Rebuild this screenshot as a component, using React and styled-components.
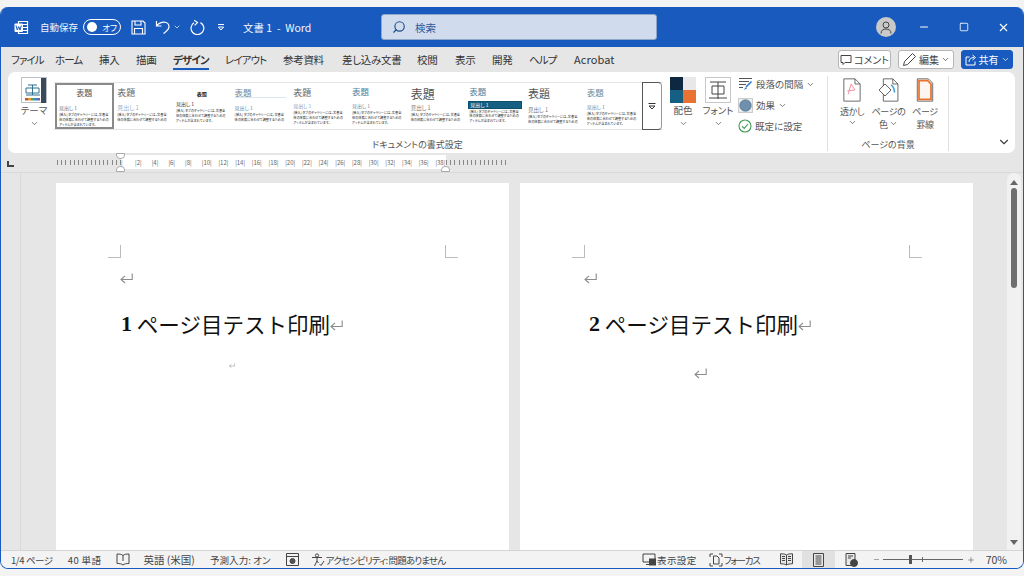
import styled, { createGlobalStyle } from "styled-components";
import { ChevronDown, Minus, Plus, Search, Square, X } from "lucide-react";

const GlobalStyle = createGlobalStyle`
    html, body {
        margin: 0;
        padding: 0;
        width: 1024px;
        height: 576px;
        overflow: hidden;
        background: #f3f3f3;
        font-family: "Noto Sans CJK JP", "Noto Sans", sans-serif;
        font-feature-settings: "palt";
        color: #444;
    }
    * { box-sizing: border-box; }
`

const tabs = [
    ["ファイル", 44], ["ホーム", 44], ["挿入", 37], ["描画", 37], ["デザイン", 52, true], ["レイアウト", 58],
    ["参考資料", 59], ["差し込み文書", 75], ["校閲", 38], ["表示", 37], ["開発", 37], ["ヘルプ", 45], ["Acrobat", 50],
];

const BODY_LONG = "[挿入] タブのギャラリーには、文書全体の体裁に合わせて調整するためのアイテムが含まれています。";
const BODY_SHORT = "[挿入] タブのギャラリーには、文書全体の体裁に合わせて調整するための";

const styles = [
    { center: true, size: 8, color: "#555", sub: "#777", top: 3, gap: 7, selected: true },
    { size: 9, color: "#666", sub: "#9db4c6", subSize: 6, top: 3.5, gap: 7.5, short: true },
    { center: true, size: 5, color: "#222", sub: "#333", top: 7, gap: 4, bold: true },
    { size: 8.5, color: "#6d8ba0", sub: "#6d8ba0", top: 3.75, gap: 7, rule: true, short: true },
    { size: 9, color: "#666", sub: "#7d9ec0", top: 3.5, gap: 5.5 },
    { size: 8.5, color: "#4f7f9b", sub: "#6d8ba0", top: 3.25, gap: 6.25 },
    { size: 12, color: "#555", sub: "#777", subSize: 5.5, top: 4, gap: 4, short: true },
    { size: 8.5, color: "#4f7f9b", sub: "#fff", top: 2.75, gap: 5.25, bar: true },
    { size: 11, color: "#555", sub: "#777", subSize: 5.5, top: 3.5, gap: 7.5, short: true },
    { size: 8.5, color: "#6d8ba0", sub: "#6d8ba0", top: 3.75, gap: 6.75 },
];

function Arrow({ size = 13 }) {
    return (
        <ArrowSvg width={size} height={size * 0.85} viewBox="0 0 13 11" fill="none" stroke="#8c8c8c" strokeWidth="1.1">
            <path d="M12.2 .5V6.5H1M5 2.8 1 6.5 5 10" />
        </ArrowSvg>
    );
}

function WordIcon() {
    return (
        <svg width="15" height="15" viewBox="0 0 15 15" fill="none">
            <path d="M4.5 1.5h9v12h-9z" stroke="#fff" strokeWidth="1.2" />
            <path d="M9 4.5h4M9 7.5h4M9 10.5h4" stroke="#fff" />
            <rect x=".5" y="3.5" width="8.5" height="8.5" rx="1" fill="#fff" />
            <path d="M2 5.5 3.3 10l1.4-3.4L6 10l1.3-4.5" stroke="#185abd" strokeWidth="1" />
        </svg>
    );
}

function SaveIcon() {
    return (
        <svg width="15" height="15" viewBox="0 0 15 15" fill="none" stroke="#fff" strokeWidth="1.1">
            <path d="M1 1h11l2 2v11H1z" />
            <path d="M4 1v4h6V1M3.5 14V8.5h8V14" />
        </svg>
    );
}

function UndoIcon() {
    return (
        <svg width="15" height="15" viewBox="0 0 15 15" fill="none" stroke="#fff" strokeWidth="1.2">
            <path d="M1.5 1v5h5M1.5 6C4 3 6.500 2.200 9 2.200c3.500 0 5 2.500 5 4.600 0 3-2.500 4.500-5.500 6.700" />
        </svg>
    );
}

function RedoIcon() {
    return (
        <svg width="15" height="16" viewBox="0 0 15 16" fill="none" stroke="#fff" strokeWidth="1.2">
            <path d="M4.200 1.200 7.500 3.600 4.600 6.400" />
            <path d="M10.500 3.600A6.400 6.400 0 1 1 4 3.800" />
        </svg>
    );
}

function QuickIcon() {
    return (
        <svg width="8" height="8" viewBox="0 0 8 8" fill="none" stroke="#fff" strokeWidth="1">
            <path d="M1 1.500h6M1.400 4h5.200L4 7z" />
        </svg>
    );
}

function AvatarIcon() {
    return (
        <svg width="12" height="13" viewBox="0 0 12 13" fill="none" stroke="#444" strokeWidth="1">
            <circle cx="6" cy="4" r="3" />
            <path d="M1 12.500c0-3 2-4.500 5-4.500s5 1.500 5 4.500" />
        </svg>
    );
}

function CommentIcon() {
    return (
        <svg width="12" height="12" viewBox="0 0 12 12" fill="none" stroke="#444" strokeWidth="1">
            <path d="M1 1.500h10v7H5L3 10.500v-2H1z" />
        </svg>
    );
}

function PenIcon() {
    return (
        <svg width="15" height="15" viewBox="0 0 15 15" fill="none" stroke="#444" strokeWidth="1">
            <path d="M10.500 1.500 13.500 4.500 5.500 12.500 1.500 13.500 2.500 9.500z" />
        </svg>
    );
}

function ShareIcon() {
    return (
        <svg width="12" height="12" viewBox="0 0 12 12" fill="none" stroke="#fff" strokeWidth="1">
            <path d="M4.500 3H1v8h9V7.500" />
            <path d="M4 8c0-3 2-4.500 5-4.500M7.500 1 10.500 3.500 7.500 6" />
        </svg>
    );
}

function ThemeIcon() {
    return (
        <svg width="26" height="26" viewBox="0 0 26 26">
            <rect x=".5" y=".5" width="25" height="25" fill="#fff" stroke="#b9c0c8" />
            <path d="M20 1h5v25h-5z" fill="#3a4a5a" />
            <path d="M7 8h9M5 11h13v5H5zM11.500 8v10M5 18h14" fill="none" stroke="#2f6f90" strokeWidth="1" />
            <path d="M4 21h3v2.500H4z" fill="#c9503c" />
            <path d="M7 21h3v2.500H7z" fill="#e39a2d" />
            <path d="M10 21h3v2.500h-3z" fill="#5fa04e" />
            <path d="M13 21h3v2.500h-3z" fill="#2f8fc0" />
            <path d="M16 21h3v2.500h-3z" fill="#8a55a5" />
        </svg>
    );
}

function FontIcon() {
    return (
        <svg width="26" height="26" viewBox="0 0 26 26" fill="none">
            <rect x=".5" y=".5" width="25" height="25" fill="#fff" stroke="#c8c8c8" />
            <path d="M5 5h16M7 9h12v8H7zM13 5v17M4 21h18" stroke="#444" strokeWidth="1" />
        </svg>
    );
}

function SpacingIcon() {
    return (
        <svg width="15" height="14" viewBox="0 0 15 14" fill="none">
            <path d="M1 1.500h13M1 4.500h10M1 7.500h7M1 10.500h4" stroke="#555" />
            <path d="M13.500 4.500 8 10" stroke="#2b7cd3" strokeWidth="1.600" />
            <path d="M8 10 5.500 13 9 11.500z" fill="#2b7cd3" />
        </svg>
    );
}

function EffectIcon() {
    return (
        <svg width="15" height="15" viewBox="0 0 15 15">
            <rect x=".5" y=".5" width="14" height="14" fill="#e8edf2" stroke="#ccc" />
            <circle cx="7.500" cy="7.500" r="5.600" fill="#6f90ae" stroke="#57758f" />
        </svg>
    );
}

function DefaultIcon() {
    return (
        <svg width="14" height="14" viewBox="0 0 14 14" fill="none" stroke="#3f9a54" strokeWidth="1.100">
            <circle cx="7" cy="7" r="6" />
            <path d="M4 7.200 6.200 9.400 10 5" />
        </svg>
    );
}

function WatermarkIcon() {
    return (
        <svg width="18" height="24" viewBox="0 0 21 28" fill="none">
            <path d="M1 1h13l6 6v20H1z" fill="#fff" stroke="#555" />
            <path d="M14 1v6h6" stroke="#555" />
            <path d="M6 19 9.500 7 14 14 5 15" stroke="#f28a9c" strokeWidth="1.100" />
        </svg>
    );
}

function PageColorIcon() {
    return (
        <svg width="21" height="24" viewBox="0 0 24 28" fill="none">
            <path d="M6 1h11l6 6v20H6z" fill="#fff" stroke="#555" />
            <path d="M17 1v6h6" stroke="#555" />
            <path d="M8 7 1 14l7 7 7-7z" fill="#fff" stroke="#444" />
            <path d="M15 8c3 2 4 5 4 9" stroke="#4aa3df" strokeWidth="2" />
        </svg>
    );
}

function BorderIcon() {
    return (
        <svg width="18" height="24" viewBox="0 0 20 28" fill="none">
            <path d="M1 1h13l5 5v21H1z" fill="#fff" stroke="#555" />
            <path d="M3 3h10l4 4v18H3z" fill="#fdf6f0" stroke="#e8722d" strokeWidth="2" />
        </svg>
    );
}

function BookIcon() {
    return (
        <svg width="14" height="13" viewBox="0 0 14 13" fill="none" stroke="#444">
            <path d="M7 2.500C5.500 1.200 3.500 1 1 1v9.500c2.500 0 4.500 .2 6 1.500 1.500-1.300 3.500-1.500 6-1.500V1c-2.500 0-4.500 .2-6 1.500zM7 2.500V8" />
        </svg>
    );
}

function MacroIcon() {
    return (
        <svg width="13" height="13" viewBox="0 0 13 13" fill="none" stroke="#444">
            <path d="M.5 .5h12v12H.5zM.5 3.500h12" />
            <circle cx="6.500" cy="8" r="2.500" fill="#555" />
        </svg>
    );
}

function AccessIcon() {
    return (
        <svg width="14" height="14" viewBox="0 0 14 14" fill="none" stroke="#444">
            <circle cx="6" cy="2.500" r="1.600" />
            <path d="M1 4.500h10M6 5v3L3.500 13M6 8l1.500 2M8.500 11 10 12.500 13 8" />
        </svg>
    );
}

function DisplayIcon() {
    return (
        <svg width="14" height="13" viewBox="0 0 14 13" fill="none" stroke="#444">
            <path d="M1 1h12v8H1zM4 11.500h4" />
            <rect x="7.500" y="6" width="6" height="6" fill="#444" />
        </svg>
    );
}

function FocusIcon() {
    return (
        <svg width="14" height="14" viewBox="0 0 14 14" fill="none" stroke="#444">
            <path d="M1 4V1h3M10 1h3v3M13 10v3h-3M4 13H1v-3" />
            <path d="M4.500 3h3.500l2 2v6H4.500z" />
        </svg>
    );
}

function ReadIcon() {
    return (
        <svg width="13" height="13" viewBox="0 0 13 13" fill="#e8e8e8" stroke="#444">
            <path d="M6.500 2C5 .9 3 .8 .5 .8v10c2.500 0 4.500 .2 6 1.200 1.500-1 3.500-1.200 6-1.200V.8C10 .8 8 .9 6.500 2zM6.500 2v10M2 3.500h3M2 5.500h3M2 7.500h3M8 3.500h3M8 5.500h3M8 7.500h3" />
        </svg>
    );
}

function PrintIcon() {
    return (
        <svg width="11" height="14" viewBox="0 0 11 14" fill="#e8e8e8" stroke="#444">
            <path d="M.5 .5h10v13H.5zM2.500 3h6M2.500 5h6M2.500 7h6M2.500 9h6M2.500 11h6" />
        </svg>
    );
}

function WebIcon() {
    return (
        <svg width="13" height="14" viewBox="0 0 13 14" fill="none" stroke="#444">
            <path d="M1 .5h9v12H1zM3 3h5M3 5h3" fill="#e8e8e8" />
            <circle cx="9" cy="10" r="3.500" fill="#444" />
        </svg>
    );
}

function GalleryCard({ card }) {
    return (
        <Card $selected={card.selected}>
            <CardTitle $center={card.center} $size={card.size} $color={card.color} $top={card.top} $bold={card.bold} $rule={card.rule}>表題</CardTitle>
            <CardHeading $color={card.sub} $gap={card.gap} $size={card.subSize} $bar={card.bar}>見出し 1</CardHeading>
            <CardBody>{card.short ? BODY_SHORT : BODY_LONG}</CardBody>
        </Card>
    );
}

function DocPage({ number, headingLeft, small, large }) {
    return (
        <Page>
            <CropMark $side="left" />
            <CropMark $side="right" />
            <Para $left={64}><Arrow /></Para>
            <Heading $left={headingLeft}>
                <HeadNum>{number}</HeadNum> ページ目テスト印刷<Arrow />
            </Heading>
            {small && <SmallReturn><Arrow size={6} /></SmallReturn>}
            {large && <LargeReturn><Arrow /></LargeReturn>}
        </Page>
    );
}

export default function App() {
    const tickLabels = [];
    for (let i = 2; i <= 38; i += 2) tickLabels.push(i);

    return (
        <>
            <GlobalStyle />
            <Word>
                <TitleBar>
                    <IconSlot $left={14}><WordIcon /></IconSlot>
                    <TitleText $left={11}>自動保存</TitleText>
                    <Toggle><Knob />オフ</Toggle>
                    <IconSlot $left={10}><SaveIcon /></IconSlot>
                    <IconSlot $left={9}><UndoIcon /></IconSlot>
                    <IconSlot $left={3}><ChevronDown size={8} color="#fff" /></IconSlot>
                    <IconSlot $left={9}><RedoIcon /></IconSlot>
                    <IconSlot $left={12}><QuickIcon /></IconSlot>
                    <DocTitle>文書 1 &nbsp;-&nbsp; Word</DocTitle>
                    <SearchBox>
                        <SearchGlyph size={14} color="#1f4e8c" />
                        <span>検索</span>
                    </SearchBox>
                    <Avatar><AvatarIcon /></Avatar>
                    <WindowButton $left={21}><Minus size={12} color="#fff" /></WindowButton>
                    <WindowButton $left={27}><Square size={10} color="#fff" /></WindowButton>
                    <WindowButton $left={27}><X size={13} color="#fff" /></WindowButton>
                </TitleBar>

                <TabRow>
                    <TabList>
                        {tabs.map(([label, width, active]) => (
                            <Tab
                                key={label}
                                $width={width}
                                $active={active}
                                $latin={label === "Acrobat"}
                                $kana={/^[ァ-ヶー]+$/.test(label)}
                            >
                                {label}
                            </Tab>
                        ))}
                    </TabList>
                    <TabActions>
                        <ActionButton $width={53}><CommentIcon />コメント</ActionButton>
                        <ActionButton $width={56}><PenIcon />編集<ChevronDown size={9} /></ActionButton>
                        <ActionButton $width={52} $primary><ShareIcon />共有<ChevronDown size={9} /></ActionButton>
                    </TabActions>
                </TabRow>

                <Ribbon>
                    <Group $width={820}>
                        <GroupBody>
                            <BigTool $left={13}>
                                <ThemeIcon />
                                <BigLabel>テーマ</BigLabel>
                                <ChevronDown size={9} />
                            </BigTool>
                            <Gallery>
                                {styles.map((card, i) => <GalleryCard key={i} card={card} />)}
                                <MoreButton>
                                    <svg width="8" height="8" viewBox="0 0 8 8" fill="none" stroke="#333"><path d="M.5 1.500h7M1 4h6L4 7z" /></svg>
                                </MoreButton>
                            </Gallery>
                            <BigTool $left={7}>
                                <Swatch>
                                    <SwatchCell $color="#0e2841" />
                                    <SwatchCell $color="#e8e8e8" />
                                    <SwatchCell $color="#156082" />
                                    <SwatchCell $color="#e97132" />
                                </Swatch>
                                <BigLabel>配色</BigLabel>
                                <ChevronDown size={9} />
                            </BigTool>
                            <BigTool $left={9}>
                                <FontIcon />
                                <BigLabel>フォント</BigLabel>
                                <ChevronDown size={9} />
                            </BigTool>
                            <SmallTools>
                                <SmallTool><SpacingIcon />段落の間隔<ChevronDown size={9} /></SmallTool>
                                <SmallTool><EffectIcon />効果<ChevronDown size={9} /></SmallTool>
                                <SmallTool><DefaultIcon />既定に設定</SmallTool>
                            </SmallTools>
                        </GroupBody>
                        <GroupLabel>ドキュメントの書式設定</GroupLabel>
                    </Group>
                    <Group $width={121}>
                        <GroupBody>
                            <PageTool $width={37} $left={5.5}>
                                <WatermarkIcon />
                                <PageLabel>透かし</PageLabel>
                                <ChevronDown size={9} />
                            </PageTool>
                            <PageTool $width={34} $left={1}>
                                <PageColorIcon />
                                <PageLabel>ページの</PageLabel>
                                <PageLabel>色 <ChevronDown size={9} /></PageLabel>
                            </PageTool>
                            <PageTool $width={30} $left={4.5}>
                                <BorderIcon />
                                <PageLabel>ページ</PageLabel>
                                <PageLabel>罫線</PageLabel>
                            </PageTool>
                        </GroupBody>
                        <GroupLabel>ページの背景</GroupLabel>
                    </Group>
                    <CollapseSlot><ChevronDown size={14} color="#444" /></CollapseSlot>
                </Ribbon>

                <RulerRow>
                    <RulerCorner />
                    <Ticks $width={64} />
                    <RulerWhite>
                        <TickLabel $width={14}>|</TickLabel>
                        {tickLabels.map(n => <TickLabel key={n} $width={16.7}>|{n}|</TickLabel>)}
                        <TopMarker $left={-5} /><BottomMarker $left={-5} /><BottomMarker $left={320} />
                    </RulerWhite>
                    <Ticks $width={62} />
                </RulerRow>

                <Workspace>
                    <SideRuler />
                    <Pages>
                        <DocPage number="1" headingLeft={65} small />
                        <DocPage number="2" headingLeft={69} large />
                    </Pages>
                    <ScrollBar>
                        <ScrollArrow $up />
                        <Thumb />
                        <ScrollArrow />
                    </ScrollBar>
                </Workspace>

                <StatusBar>
                    <StatusText $left={10} $spacing={-0.4}>1/4 ページ</StatusText>
                    <StatusText $left={15} $spacing={0.4}>40 単語</StatusText>
                    <StatusIcon $left={15}><BookIcon /></StatusIcon>
                    <StatusText $left={13} $size={10.5}>英語 (米国)</StatusText>
                    <StatusText $left={15} $spacing={0.1}>予測入力: オン</StatusText>
                    <StatusIcon $left={15}><MacroIcon /></StatusIcon>
                    <StatusIcon $left={12}><AccessIcon /></StatusIcon>
                    <StatusText $left={1} $spacing={-0.85}>アクセシビリティ: 問題ありません</StatusText>
                    <StatusSpacer />
                    <StatusIcon><DisplayIcon /></StatusIcon>
                    <StatusText $left={1} $spacing={0.4}>表示設定</StatusText>
                    <StatusIcon $left={12}><FocusIcon /></StatusIcon>
                    <StatusText $left={1} $spacing={-1.2}>フォーカス</StatusText>
                    <StatusIcon $left={20}><ReadIcon /></StatusIcon>
                    <ViewButton><PrintIcon /></ViewButton>
                    <StatusIcon $left={10}><WebIcon /></StatusIcon>
                    <StatusIcon $left={15}><Minus size={7} color="#666" /></StatusIcon>
                    <Slider><SliderThumb /><SliderMark /></Slider>
                    <StatusIcon $left={4}><Plus size={8} color="#666" /></StatusIcon>
                    <StatusText $left={11} $size={10.5}>70%</StatusText>
                </StatusBar>
            </Word>
        </>
    );
}

const ArrowSvg = styled.svg`
    display: block;
`

const Word = styled.div`
    margin-top: 7px;
    width: 1024px;
    height: 562px;
    display: flex;
    flex-direction: column;
    background: #e6e6e6;
    border: 1px solid #185abd;
    border-top: none;
    border-radius: 8px;
    overflow: hidden;
`

const TitleBar = styled.div`
    height: 40px;
    flex: none;
    margin-left: -1px;
    margin-right: -1px;
    display: flex;
    align-items: center;
    background: #185abd;
    color: #fff;
`

const IconSlot = styled.div`
    margin-left: ${p => p.$left}px;
    display: flex;
    align-items: center;
`

const TitleText = styled.div`
    margin-left: ${p => p.$left}px;
    font-size: 9.5px;
    white-space: nowrap;
    color: #f2f6fc;
`

const DocTitle = styled.div`
    margin-left: 18px;
    width: 138px;
    font-size: 10.5px;
    white-space: nowrap;
    color: #f2f6fc;
`

const Toggle = styled.div`
    margin-left: 5px;
    width: 38px;
    height: 16px;
    padding-left: 3px;
    display: flex;
    align-items: center;
    gap: 5px;
    border: 1px solid #fff;
    border-radius: 8px;
    font-size: 8.5px;
`

const Knob = styled.span`
    width: 10px;
    height: 10px;
    border-radius: 50%;
    background: #fff;
    flex: none;
`

const SearchBox = styled.div`
    width: 276px;
    height: 26px;
    padding-left: 10px;
    display: flex;
    align-items: center;
    gap: 9px;
    background: #d0dcee;
    border: 1px solid #8ea6c8;
    border-radius: 3px;
    color: #2b5797;
    font-size: 10.5px;
`

const SearchGlyph = styled(Search)`
    transform: scaleX(-1);
`

const Avatar = styled.div`
    margin-left: auto;
    width: 20px;
    height: 20px;
    border-radius: 50%;
    background: #c9c9c9;
    display: flex;
    align-items: center;
    justify-content: center;
`

const WindowButton = styled.div`
    margin-left: ${p => p.$left}px;
    width: 13px;
    display: flex;
    justify-content: center;
    &:last-child { margin-right: 14px; }
`

const TabRow = styled.div`
    height: 25px;
    flex: none;
    display: flex;
    align-items: center;
    justify-content: space-between;
    padding: 0 10px 0 10px;
    background: #e6e6e6;
`

const TabList = styled.div`
    display: flex;
    align-items: center;
`

const Tab = styled.div`
    position: relative;
    width: ${p => p.$width}px;
    font-size: ${p => p.$latin ? "11px" : "10.5px"};
    letter-spacing: ${p => p.$latin ? "0.1px" : p.$kana ? "-0.9px" : "-0.3px"};
    line-height: 25px;
    white-space: nowrap;
    color: #333;
    font-weight: ${p => p.$active ? 700 : 400};

    ${p => p.$active && `
        &::after {
            content: "";
            position: absolute;
            left: 0;
            width: 36px;
            bottom: 2px;
            height: 2px;
            background: #185abd;
        }
    `}
`

const TabActions = styled.div`
    display: flex;
    gap: 7px;
`

const ActionButton = styled.div`
    width: ${p => p.$width}px;
    height: 19px;
    display: flex;
    align-items: center;
    justify-content: center;
    gap: 2px;
    font-size: 10px;
    border-radius: 3px;
    border: 1px solid ${p => p.$primary ? "#185abd" : "#b5b5b5"};
    background: ${p => p.$primary ? "#185abd" : "#fff"};
    color: ${p => p.$primary ? "#fff" : "#444"};
`

const Ribbon = styled.div`
    height: 81px;
    flex: none;
    margin: 0 8px 0 7px;
    display: flex;
    background: #fff;
    border-radius: 7px;
`

const Group = styled.div`
    width: ${p => p.$width}px;
    flex: none;
    display: flex;
    flex-direction: column;
    margin: 4px 0 2px;
    border-right: 1px solid #e0e0e0;
`

const GroupBody = styled.div`
    flex: 1;
    display: flex;
    align-items: flex-start;
`

const GroupLabel = styled.div`
    font-size: 9px;
    line-height: 13px;
    text-align: center;
    color: #555;
`

const BigTool = styled.div`
    width: 26px;
    margin-left: ${p => p.$left}px;
    flex: none;
    margin-top: 1px;
    display: flex;
    flex-direction: column;
    align-items: center;
    color: #555;
`

const BigLabel = styled.div`
    font-size: 9.5px;
    line-height: 15px;
    white-space: nowrap;
    margin: 0 0 1px;
`

const Gallery = styled.div`
    width: 609px;
    height: 48px;
    margin: 6px 0 0 7px;
    flex: none;
    display: flex;
    background: #fff;
    border-top: 1px solid #e4e4e4;
    border-bottom: 1px solid #e4e4e4;
`

const Card = styled.div`
    width: 58.7px;
    flex: none;
    padding: 0 3.5px;
    ${p => p.$selected && "border: 2px solid #8a8a8a; padding: 0 2px; margin-left: 1px;"}
`

const CardTitle = styled.div`
    margin-top: ${p => p.$top}px;
    font-size: ${p => p.$size}px;
    line-height: ${p => p.$size + 2}px;
    color: ${p => p.$color};
    text-align: ${p => p.$center ? "center" : "left"};
    font-weight: ${p => p.$bold ? 700 : 400};
    ${p => p.$rule && "border-bottom: 1px solid #dce6ee;"}
`

const CardHeading = styled.div`
    margin-top: ${p => p.$gap}px;
    font-size: ${p => p.$size || 5}px;
    line-height: 6px;
    color: ${p => p.$color};
    ${p => p.$bar && "background: #156082; padding-left: 1px; outline: 1px solid #0e4f6d;"}
`

const CardBody = styled.div`
    margin-top: 2px;
    font-size: 3.2px;
    line-height: 4.8px;
    color: #222;
`

const MoreButton = styled.div`
    width: 20px;
    height: 48px;
    margin-top: -1px;
    display: flex;
    align-items: center;
    justify-content: center;
    flex: none;
    background: #fff;
    border: 1px solid #555;
    border-right-color: #999;
    border-radius: 0 4px 4px 0;
`

const Swatch = styled.div`
    width: 26px;
    height: 26px;
    display: grid;
    grid-template-columns: 1fr 1fr;
    grid-template-rows: 1fr 1fr;
`

const SwatchCell = styled.span`
    background: ${p => p.$color};
`

const SmallTools = styled.div`
    margin-left: 7px;
    display: flex;
    flex-direction: column;
    gap: 5px;
`

const SmallTool = styled.div`
    height: 16px;
    display: flex;
    align-items: center;
    gap: 3px;
    font-size: 9.5px;
    white-space: nowrap;
    color: #555;
`

const PageTool = styled.div`
    width: ${p => p.$width}px;
    margin-left: ${p => p.$left}px;
    padding-top: 2px;
    flex: none;
    display: flex;
    flex-direction: column;
    align-items: center;
    color: #555;
`

const PageLabel = styled.div`
    font-size: 9px;
    letter-spacing: -0.4px;
    line-height: 13px;
    white-space: nowrap;
    &:nth-child(2) { margin-top: 2.5px; }
`

const CollapseSlot = styled.div`
    display: flex;
    margin-left: auto;
    margin-right: 4px;
    margin-bottom: 4px;
    align-self: flex-end;
`

const RulerRow = styled.div`
    height: 20px;
    flex: none;
    display: flex;
    align-items: flex-start;
    border-bottom: 1px solid #dadada;
    background: #e6e6e6;
`

const RulerCorner = styled.div`
    width: 7px;
    height: 6px;
    margin: 8px 43px 0 6px;
    border-left: 2px solid #444;
    border-bottom: 2px solid #444;
    flex: none;
`

const Ticks = styled.div`
    width: ${p => p.$width}px;
    height: 5px;
    margin-top: 7px;
    flex: none;
    background: repeating-linear-gradient(90deg, #888 0 1px, transparent 1px 4.2px);
`

const RulerWhite = styled.div`
    position: relative;
    width: 325px;
    height: 14px;
    margin-top: 2px;
    flex: none;
    display: flex;
    align-items: center;
    background: #fff;
`

const TickLabel = styled.div`
    width: ${p => p.$width}px;
    flex: none;
    font-size: 6px;
    white-space: nowrap;
    color: #666;
`

const TopMarker = styled.span`
    position: absolute;
    left: ${p => p.$left}px;
    top: -2px;
    width: 9px;
    height: 6px;
    background: #fff;
    border: 1px solid #aaa;
    border-radius: 0 0 4px 4px;
`

const BottomMarker = styled.span`
    position: absolute;
    left: ${p => p.$left}px;
    bottom: -3px;
    width: 9px;
    height: 6px;
    background: #fff;
    border: 1px solid #aaa;
    border-radius: 4px 4px 0 0;
`

const Workspace = styled.div`
    flex: 1;
    min-height: 0;
    display: flex;
    background: #e6e6e6;
    overflow: hidden;
`

const SideRuler = styled.div`
    width: 20px;
    flex: none;
    border-right: 1px solid #dadada;
`

const Pages = styled.div`
    width: 987px;
    flex: none;
    display: flex;
    gap: 11px;
    padding: 10px 0 0 35px;
`

const Page = styled.div`
    position: relative;
    width: 453px;
    height: 700px;
    flex: none;
    padding-top: 90px;
    background: #fff;
`

const CropMark = styled.span`
    position: absolute;
    top: 62px;
    width: 13px;
    height: 13px;
    ${p => p.$side === "left"
        ? "left: 52px; border-right: 1px solid #bbb; border-bottom: 1px solid #bbb;"
        : "right: 51px; border-left: 1px solid #bbb; border-bottom: 1px solid #bbb;"}
`

const Para = styled.div`
    margin-left: ${p => p.$left}px;
    height: 13px;
`

const Heading = styled.div`
    margin: 22px 0 0 ${p => p.$left}px;
    display: flex;
    align-items: center;
    font-size: 21.5px;
    line-height: 32px;
    font-weight: 400;
    color: #111;
    white-space: pre;
    font-feature-settings: normal;

    svg { margin-top: 3px; }
`

const HeadNum = styled.span`
    font-family: "Liberation Serif", serif;
    font-weight: 700;
    font-size: 22px;
`

const SmallReturn = styled.div`
    margin: 23px 0 0 173px;
`

const LargeReturn = styled.div`
    margin: 28px 0 0 174px;
`

const ScrollBar = styled.div`
    width: 14px;
    flex: none;
    margin-left: -1px;
    display: flex;
    flex-direction: column;
    align-items: center;
    background: #f1f1f1;
    border-radius: 7px 7px 0 0;
`

const ScrollArrow = styled.span`
    width: 0;
    height: 0;
    flex: none;
    margin: ${p => p.$up ? "7px 0 3px" : "auto 0 5px"};
    border-left: 4px solid transparent;
    border-right: 4px solid transparent;
    ${p => p.$up ? "border-bottom: 5px solid #666;" : "border-top: 5px solid #666;"}
`

const Thumb = styled.div`
    width: 6px;
    height: 100px;
    flex: none;
    border-radius: 3px;
    background: #6f6f6f;
`

const StatusBar = styled.div`
    height: 18px;
    flex: none;
    display: flex;
    align-items: center;
    background: #f3f3f3;
    border-top: 1px solid #d4d4d4;
    padding-right: 16px;
`

const StatusText = styled.div`
    margin-left: ${p => p.$left}px;
    font-size: ${p => p.$size || 9.5}px;
    letter-spacing: ${p => p.$spacing || 0}px;
    white-space: nowrap;
    color: #444;
`

const StatusIcon = styled.div`
    margin-left: ${p => p.$left || 0}px;
    display: flex;
    align-items: center;
`

const StatusSpacer = styled.div`
    flex: 1;
`

const ViewButton = styled.div`
    margin-left: 9px;
    width: 33px;
    height: 17px;
    display: flex;
    align-items: center;
    justify-content: center;
    background: #e1e1e1;
`

const Slider = styled.div`
    position: relative;
    width: 80px;
    height: 1px;
    margin-left: 3px;
    background: #666;
`

const SliderThumb = styled.span`
    position: absolute;
    left: 26px;
    top: -4px;
    width: 3px;
    height: 9px;
    background: #555;
`

const SliderMark = styled.span`
    position: absolute;
    left: 39px;
    top: -2px;
    width: 1px;
    height: 5px;
    background: #666;
`
